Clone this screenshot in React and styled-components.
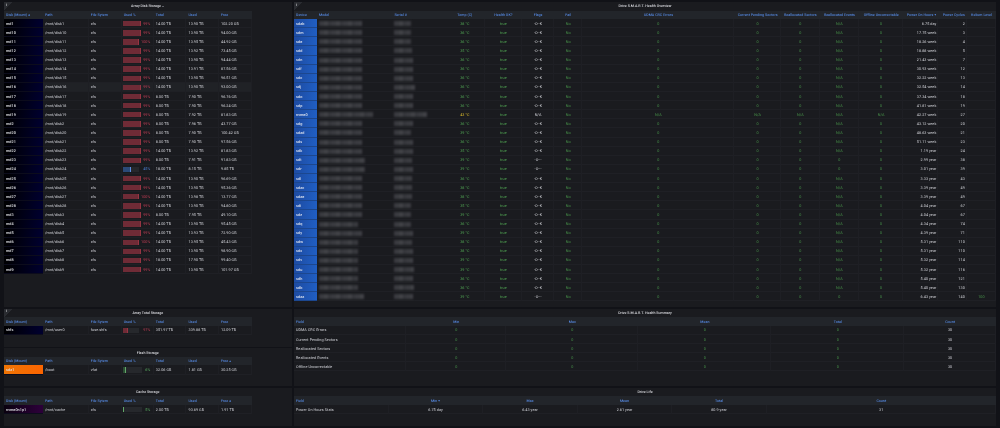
import React from "react";
import styled, { createGlobalStyle } from "styled-components";

const DISK_COLS = "39px 45.7px 33px 32.1px 32.7px 32.5px 32.7px";
const SMART_COLS = "23px 75.4px 52.6px 39.7px 37.4px 32px 28.4px 152px 46.4px 39px 39.2px 44.3px 35px 28.5px 1fr";
const SUMMARY_COLS = "112.3px 100px 132px 133.2px 132.6px 1fr";
const LIFE_COLS = "94.5px 94px 95px 94px 95px 1fr";

const GREEN = "#52a854";
const DARK_GREEN = "#48964a";

// disk number, percent, total, used, free
const arrayDisks = [
  ["1", 99, "14.00", "13.90", "102.20 GB"],
  ["10", 99, "14.00", "13.90", "94.00 GB"],
  ["11", 100, "14.00", "13.95", "44.92 GB"],
  ["12", 99, "14.00", "13.92", "73.45 GB"],
  ["13", 99, "14.00", "13.90", "94.44 GB"],
  ["14", 99, "14.00", "13.91", "87.56 GB"],
  ["15", 99, "14.00", "13.90", "96.51 GB"],
  ["16", 99, "14.00", "13.90", "93.00 GB"],
  ["17", 99, "8.00", "7.90", "96.76 GB"],
  ["18", 99, "8.00", "7.90", "96.24 GB"],
  ["19", 99, "8.00", "7.92", "81.83 GB"],
  ["2", 99, "8.00", "7.96", "43.77 GB"],
  ["20", 99, "8.00", "7.90", "100.42 GB"],
  ["21", 99, "8.00", "7.90", "97.56 GB"],
  ["22", 99, "14.00", "13.92", "81.83 GB"],
  ["23", 99, "8.00", "7.91", "91.83 GB"],
  ["24", 45, "18.00", "8.15", "9.85 TB"],
  ["25", 99, "14.00", "13.90", "96.69 GB"],
  ["26", 99, "14.00", "13.90", "95.36 GB"],
  ["27", 100, "14.00", "13.98", "13.77 GB"],
  ["28", 99, "14.00", "13.90", "94.80 GB"],
  ["3", 99, "8.00", "7.95", "49.10 GB"],
  ["4", 99, "14.00", "13.90", "95.45 GB"],
  ["5", 99, "14.00", "13.93", "72.90 GB"],
  ["6", 100, "14.00", "13.95", "45.43 GB"],
  ["7", 99, "14.00", "13.90", "98.90 GB"],
  ["8", 99, "18.00", "17.90", "99.40 GB"],
  ["9", 99, "14.00", "13.90", "101.97 GB"],
].map(([n, pct, total, used, free]) => ({
  mount: `md${n}`,
  path: `/mnt/disk${n}`,
  fs: "xfs",
  pct,
  fill: pct === 45 ? 48 : 100,
  track: pct === 99 ? 18 : 16,
  tone: pct === 45 ? "blue" : "red",
  total: `${total} TB`,
  used: `${used} TB`,
  free,
}));

const totalDisks = [
  { mount: "shfs", path: "/mnt/user0", fs: "fuse.shfs", pct: 97, fill: 30, track: 16.5, tone: "red", total: "351.97 TB", used: "339.88 TB", free: "12.09 TB" },
];
const flashDisks = [
  { mount: "sda1", path: "/boot", fs: "vfat", pct: 6, fill: 16, track: 18.7, tone: "green", total: "32.06 GB", used: "1.81 GB", free: "30.25 GB" },
];
const cacheDisks = [
  { mount: "nvme0n1p1", path: "/mnt/cache", fs: "xfs", pct: 5, fill: 5, track: 18.7, tone: "green", total: "2.00 TB", used: "93.69 GB", free: "1.91 TB" },
];

// device, model width, serial width, temp, power on hours, power cycles
const drives = [
  ["sdab", 43, 17, 38, "6.75 day", 2],
  ["sdm", 43, 17, 36, "17.75 week", 3],
  ["sde", 43, 17, 36, "18.26 week", 4],
  ["sdd", 43, 18, 35, "18.88 week", 5],
  ["sdn", 43, 19, 36, "21.43 week", 7],
  ["sdf", 43, 19, 36, "30.93 week", 12],
  ["sdc", 43, 19, 36, "32.22 week", 13],
  ["sdj", 43, 21, 36, "32.54 week", 14],
  ["sdo", 43, 19, 36, "37.34 week", 18],
  ["sdp", 43, 19, 36, "41.81 week", 19],
  ["nvme0", 54, 33, 43, "42.27 week", 27],
  ["sdg", 43, 19, 36, "43.12 week", 20],
  ["sdad", 43, 17, 39, "48.63 week", 21],
  ["sds", 43, 19, 36, "51.11 week", 23],
  ["sdk", 43, 19, 35, "1.19 year", 24],
  ["sdt", 46, 18, 39, "2.99 year", 38],
  ["sdr", 46, 19, 39, "3.01 year", 39],
  ["sdl", 43, 18, 36, "3.33 year", 43],
  ["sdac", 43, 18, 38, "3.39 year", 49],
  ["sdae", 43, 18, 38, "3.39 year", 49],
  ["sdi", 43, 17, 35, "4.04 year", 67],
  ["sdz", 43, 17, 39, "4.04 year", 67],
  ["sdq", 39, 17, 36, "4.34 year", 74],
  ["sdy", 43, 19, 39, "4.39 year", 71],
  ["sdw", 39, 18, 38, "5.31 year", 110],
  ["sdx", 39, 19, 38, "5.31 year", 110],
  ["sdv", 39, 19, 39, "5.32 year", 114],
  ["sdu", 39, 20, 39, "5.32 year", 116],
  ["sdh", 39, 19, 36, "5.40 year", 121],
  ["sdb", 39, 20, 36, "5.40 year", 130],
  ["sdaa", 45, 19, 39, "6.43 year", 140],
];

const summaryFields = [
  "UDMA CRC Errors",
  "Current Pending Sectors",
  "Reallocated Sectors",
  "Reallocated Events",
  "Offline Uncorrectable",
];

const smartHeaders = [
  ["Device"], ["Model"], ["Serial #"],
  ["Temp (C)", "center"], ["Health OK?", "center"], ["Flags", "center"], ["Fail", "center"],
  ["UDMA CRC Errors", "center"], ["Current Pending Sectors", "center"], ["Reallocated Sectors", "center"],
  ["Reallocated Events", "center"], ["Offline Uncorrectable", "center"],
  ["Power On Hours", "flex-end", "down"], ["Power Cycles", "flex-end"], ["Helium Level", "center"],
];

const tones = {
  red: { fill: "#6f2b36", edge: "#963543", text: "#c43e56" },
  blue: { fill: "#2b4a78", edge: "#5b8de0", text: "#4c82d8" },
  green: { fill: "#2b4d33", edge: "#62a868", text: "#5bb062" },
};

function Header({ cols, items }) {
  return (
    <HeaderRow $cols={cols}>
      {items.map(([label, align, sort]) => (
        <HeaderCell key={label} $align={align}>
          {label}
          {sort && <SortArrow $up={sort === "up"} />}
        </HeaderCell>
      ))}
    </HeaderRow>
  );
}

function DiskTable({ rows, theme, sort }) {
  const headers = [["Disk (Mount)"], ["Path"], ["File Sytem"], ["Used %"], ["Total"], ["Used"], ["Free"]];
  if (sort === "mount") headers[0] = ["Disk (Mount)", "flex-start", "up"];
  if (sort === "free") headers[6] = ["Free", "flex-start", "up"];
  return (
    <DiskTableBox>
      <Header cols={DISK_COLS} items={headers} />
      {rows.map((d) => (
        <Row key={d.mount} $cols={DISK_COLS} $active={d.mount === "md16"}>
          <MountCell $theme={theme}>{d.mount}</MountCell>
          <Cell>{d.path}</Cell>
          <Cell>{d.fs}</Cell>
          <GaugeCell>
            <Track style={{ width: d.track }}>
              <Fill $tone={d.tone} style={{ width: `${d.fill}%` }} />
            </Track>
            <Percent $tone={d.tone}>{d.pct}%</Percent>
          </GaugeCell>
          <Cell>{d.total}</Cell>
          <Cell>{d.used}</Cell>
          <Cell>{d.free}</Cell>
        </Row>
      ))}
    </DiskTableBox>
  );
}

function InfoCorner() {
  return (
    <Corner>
      <span>i</span>
    </Corner>
  );
}

function SmartRow({ drive }) {
  const [name, model, serial, temp, hours, cycles] = drive;
  const nvme = name === "nvme0";
  const old = ["sdt", "sdr", "sdaa"].includes(name);
  const count = nvme ? "N/A" : "0";
  return (
    <Row $cols={SMART_COLS}>
      <DeviceCell>{name}</DeviceCell>
      <Cell $plain><Redacted style={{ width: model }} /></Cell>
      <Cell $plain><Redacted style={{ width: serial }} /></Cell>
      <Cell $align="center" $color={nvme ? "#e2c02c" : GREEN}>{temp} °C</Cell>
      <Cell $align="center" $color={GREEN}>true</Cell>
      <Cell $align="center">{nvme ? "N/A" : old ? "-O---" : "-O--K"}</Cell>
      <Cell $align="center" $color={DARK_GREEN}>No</Cell>
      <Cell $align="center" $color={DARK_GREEN}>{count}</Cell>
      <Cell $align="center" $color={DARK_GREEN}>{count}</Cell>
      <Cell $align="center" $color={DARK_GREEN}>{count}</Cell>
      <Cell $align="center" $color={DARK_GREEN}>{old ? "0" : "N/A"}</Cell>
      <Cell $align="center" $color={DARK_GREEN}>{count}</Cell>
      <Cell $align="flex-end">{hours}</Cell>
      <Cell $align="flex-end">{cycles}</Cell>
      <Cell $align="center" $color={DARK_GREEN}>{name === "sdaa" ? "100" : ""}</Cell>
    </Row>
  );
}

export default function App() {
  return (
    <>
      <GlobalStyle />
      <Dashboard>
        <LeftColumn>
          <Panel>
            <InfoCorner />
            <Title>Array Disk Storage <Chevron /></Title>
            <DiskTable rows={arrayDisks} theme="navy" sort="mount" />
          </Panel>
          <Panel>
            <InfoCorner />
            <Title>Array Total Storage</Title>
            <DiskTable rows={totalDisks} theme="navy" />
          </Panel>
          <Panel>
            <Title>Flash Storage</Title>
            <DiskTable rows={flashDisks} theme="orange" sort="free" />
          </Panel>
          <Panel>
            <Title>Cache Storage</Title>
            <DiskTable rows={cacheDisks} theme="purple" sort="free" />
          </Panel>
        </LeftColumn>
        <RightColumn>
          <Panel>
            <InfoCorner />
            <Title>Drive S.M.A.R.T. Health Overview</Title>
            <Header cols={SMART_COLS} items={smartHeaders} />
            {drives.map((drive) => (
              <SmartRow key={drive[0]} drive={drive} />
            ))}
          </Panel>
          <Panel>
            <Title>Drive S.M.A.R.T. Health Summary</Title>
            <Header
              cols={SUMMARY_COLS}
              items={[["Field"], ["Min", "center"], ["Max", "center"], ["Mean", "center"], ["Total", "center"], ["Count", "center"]]}
            />
            {summaryFields.map((field) => (
              <Row key={field} $cols={SUMMARY_COLS}>
                <Cell>{field}</Cell>
                <Cell $align="center" $color={DARK_GREEN}>0</Cell>
                <Cell $align="center" $color={DARK_GREEN}>0</Cell>
                <Cell $align="center" $color={DARK_GREEN}>0</Cell>
                <Cell $align="center" $color={DARK_GREEN}>0</Cell>
                <Cell $align="center">30</Cell>
              </Row>
            ))}
          </Panel>
          <Panel>
            <Title>Drive Life</Title>
            <Header
              cols={LIFE_COLS}
              items={[["Field"], ["Min", "center", "down"], ["Max", "center"], ["Mean", "center"], ["Total", "center"], ["Count", "center"]]}
            />
            <Row $cols={LIFE_COLS}>
              <Cell>Power On Hours Stats</Cell>
              <Cell $align="center">6.75 day</Cell>
              <Cell $align="center">6.43 year</Cell>
              <Cell $align="center">2.61 year</Cell>
              <Cell $align="center">80.9 year</Cell>
              <Cell $align="center">31</Cell>
            </Row>
          </Panel>
        </RightColumn>
      </Dashboard>
    </>
  );
}

const GlobalStyle = createGlobalStyle`
  * {
    box-sizing: border-box;
  }
  body {
    margin: 0;
    background: #111217;
    font-family: Roboto, "Liberation Sans", sans-serif;
    font-size: 3.6px;
    color: #d4d5db;
    overflow: hidden;
  }
`;
/* own layer without a backdrop, keeps the tiny type in greyscale */
const Dashboard = styled.div`
  display: grid;
  grid-template-columns: 287.5px 702px;
  column-gap: 2.5px;
  height: 428px;
  padding: 2px 4px;
  will-change: transform, opacity;
  text-rendering: geometricPrecision;
`;
const LeftColumn = styled.div`
  display: grid;
  grid-template-rows: 305px 37.8px 37.8px 38px;
  row-gap: 1.8px;
`;
const RightColumn = styled.div`
  display: grid;
  grid-template-rows: 305px 77.4px 38px;
  row-gap: 1.8px;
`;
const Panel = styled.section`
  position: relative;
  min-width: 0;
  background: #1a1b1f;
  overflow: hidden;
  opacity: 0.999;
`;
const Corner = styled.div`
  position: absolute;
  top: 0;
  left: 0;
  width: 8px;
  height: 8px;
  background: linear-gradient(135deg, #2a2c31 50%, transparent 50%);
  span {
    position: absolute;
    left: 2px;
    top: 0.5px;
    font-size: 3.6px;
    font-weight: 700;
    line-height: 4px;
    color: #c4c5ca;
  }
`;
const Title = styled.div`
  display: flex;
  align-items: center;
  justify-content: center;
  gap: 1.5px;
  height: 8.5px;
  font-weight: 500;
  color: #d8d9de;
  white-space: nowrap;
`;
const Chevron = styled.i`
  width: 2px;
  height: 1px;
  background: #5c5e65;
`;
const DiskTableBox = styled.div`
  width: 248px;
`;
const HeaderRow = styled.div`
  display: grid;
  grid-template-columns: ${(p) => p.$cols};
  height: 8.6px;
  background: #22252a;
`;
const HeaderCell = styled.div`
  display: flex;
  align-items: center;
  justify-content: ${(p) => p.$align || "flex-start"};
  gap: 1px;
  padding: 0 2px;
  font-weight: 500;
  letter-spacing: 0.03px;
  color: #5486dc;
  white-space: nowrap;
`;
const SortArrow = styled.i`
  width: 2px;
  height: 2px;
  background: currentColor;
  clip-path: ${(p) => (p.$up ? "polygon(50% 0, 100% 100%, 0 100%)" : "polygon(0 0, 100% 0, 50% 100%)")};
`;
const Row = styled.div`
  display: grid;
  grid-template-columns: ${(p) => p.$cols};
  height: 9.12px;
  background: ${(p) => (p.$active ? "#202226" : "transparent")};
`;
const Cell = styled.div`
  display: flex;
  align-items: center;
  justify-content: ${(p) => p.$align || "flex-start"};
  min-width: 0;
  padding: 1px 1px 0 2px;
  font-size: 3.75px;
  letter-spacing: 0.05px;
  border-right: ${(p) => (p.$plain ? "0" : "1px solid #1e1f24")};
  border-bottom: 1px solid #1f2025;
  color: ${(p) => p.$color || "inherit"};
  white-space: nowrap;
`;
const mountBackground = {
  navy: "linear-gradient(100deg, #000003 10%, #00002c 90%)",
  orange: "linear-gradient(100deg, #ee7505, #fb6400)",
  purple: "linear-gradient(100deg, #0b0210 5%, #2b0038 90%)",
};
const MountCell = styled(Cell)`
  border-right: 0;
  border-bottom-color: #0c0c1c;
  background: ${(p) => mountBackground[p.$theme]};
  background-clip: padding-box;
  font-weight: 500;
  color: #dfe0e5;
`;
const DeviceCell = styled(Cell)`
  border-right: 0;
  border-bottom-color: #1c478f;
  background: linear-gradient(100deg, #1d4aa0, #205fc4);
  background-clip: padding-box;
  font-weight: 500;
  color: #e2e6f0;
`;
const GaugeCell = styled(Cell)`
  justify-content: space-between;
  padding: 1px 2.5px 0 1.3px;
`;
const Track = styled.div`
  height: 5.5px;
  background: #26282c;
`;
const Fill = styled.div`
  height: 100%;
  min-width: 1px;
  background: ${(p) => tones[p.$tone].fill};
  border-right: 1px solid ${(p) => tones[p.$tone].edge};
`;
const Percent = styled.span`
  color: ${(p) => tones[p.$tone].text};
`;
const Redacted = styled.div`
  height: 5px;
  background: repeating-linear-gradient(90deg, #3a3b40 0 5px, #414247 5px 9px, #35363b 9px 12px);
  filter: blur(1px);
`;
